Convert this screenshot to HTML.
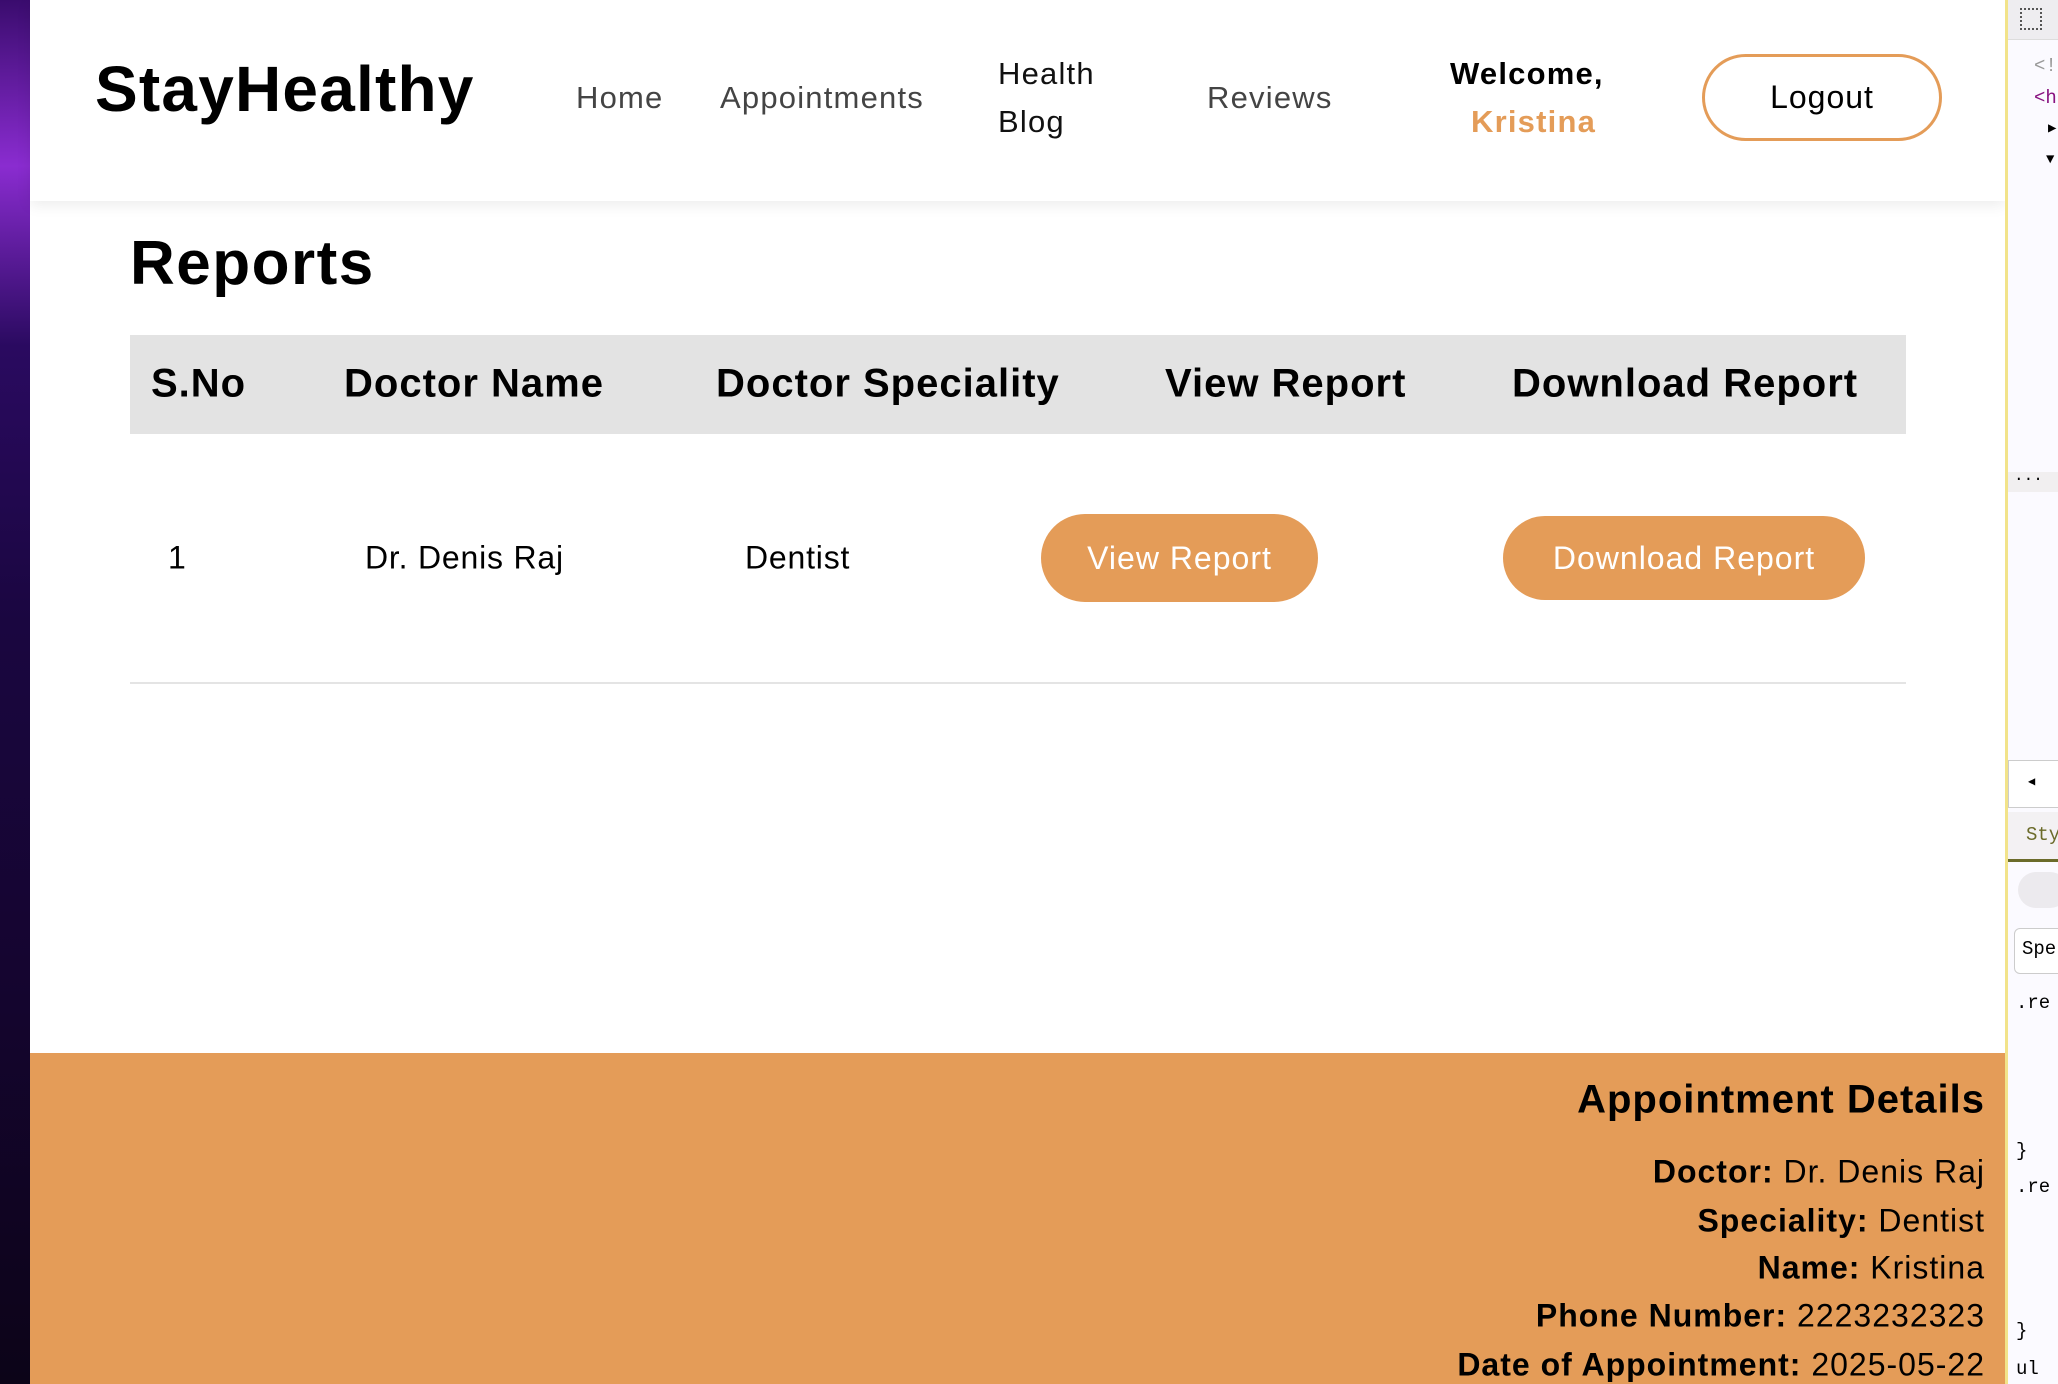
<!DOCTYPE html>
<html><head><meta charset="utf-8"><style>
*{margin:0;padding:0;box-sizing:border-box}
body{width:2058px;height:1384px;overflow:hidden;position:relative;background:#fff;font-family:"Liberation Sans",sans-serif;color:#000}
.a{position:absolute;white-space:nowrap}
#left{left:0;top:0;width:30px;height:1384px;background:linear-gradient(180deg,#3a0c6e 0%,#8a2cd0 12%,#2a0a60 25%,#1a0640 45%,#150530 70%,#0c0418 100%)}
#nav{left:30px;top:0;width:1975px;height:201px;background:#fff;box-shadow:0 4px 14px rgba(0,0,0,.08)}
.n{font-size:31px;color:#444;transform:translateY(-50%);letter-spacing:1.2px}
.btn{position:absolute;background:#e49c58;color:#fff;border-radius:44px;font-size:32px;display:flex;align-items:center;justify-content:center;letter-spacing:1px}
.th{font-size:40px;font-weight:bold;top:384px;transform:translateY(-50%);letter-spacing:1px}
.td{font-size:32px;top:558px;transform:translateY(-50%);letter-spacing:0.8px}
#foot{left:30px;top:1053px;width:1975px;height:331px;background:#e49c58}
.f{right:73px;font-size:32px;transform:translateY(-50%);letter-spacing:1px}
#dev{left:2005px;top:0;width:53px;height:1384px;background:#fbfaff;border-left:3px solid #f2e38a;font-family:"Liberation Mono",monospace;font-size:19px;overflow:hidden}
</style></head><body>
<div class="a" id="left"></div>
<div class="a" id="nav"></div>
<div class="a" style="left:95px;top:52px;font-size:64px;font-weight:bold;letter-spacing:1.2px">StayHealthy</div>
<div class="a n" style="left:576px;top:98px">Home</div>
<div class="a n" style="left:720px;top:98px">Appointments</div>
<div class="a n" style="left:998px;top:74px;color:#111">Health</div>
<div class="a n" style="left:998px;top:122px;color:#111">Blog</div>
<div class="a n" style="left:1207px;top:98px">Reviews</div>
<div class="a n" style="left:1450px;top:74px;font-weight:bold;color:#000">Welcome,</div>
<div class="a n" style="left:1471px;top:122px;font-weight:bold;color:#e49c58">Kristina</div>
<div class="a" style="left:1702px;top:54px;width:240px;height:87px;border:3px solid #e49c58;border-radius:44px;display:flex;align-items:center;justify-content:center;font-size:32px;letter-spacing:1px">Logout</div>

<div class="a" style="left:130px;top:228px;font-size:62px;font-weight:bold;letter-spacing:1.5px">Reports</div>
<div class="a" style="left:130px;top:335px;width:1776px;height:99px;background:#e3e3e3"></div>
<div class="a th" style="left:151px">S.No</div>
<div class="a th" style="left:344px">Doctor Name</div>
<div class="a th" style="left:716px">Doctor Speciality</div>
<div class="a th" style="left:1165px">View Report</div>
<div class="a th" style="left:1512px">Download Report</div>
<div class="a td" style="left:168px">1</div>
<div class="a td" style="left:365px">Dr. Denis Raj</div>
<div class="a td" style="left:745px">Dentist</div>
<div class="btn" style="left:1041px;top:514px;width:277px;height:88px">View Report</div>
<div class="btn" style="left:1503px;top:516px;width:362px;height:84px">Download Report</div>
<div class="a" style="left:130px;top:682px;width:1776px;height:2px;background:#e4e4e4"></div>

<div class="a" id="foot"></div>
<div class="a f" style="top:1100px;font-size:40px;font-weight:bold">Appointment Details</div>
<div class="a f" style="top:1172px"><b>Doctor:</b> Dr. Denis Raj</div>
<div class="a f" style="top:1221px"><b>Speciality:</b> Dentist</div>
<div class="a f" style="top:1268px"><b>Name:</b> Kristina</div>
<div class="a f" style="top:1316px"><b>Phone Number:</b> 2223232323</div>
<div class="a f" style="top:1365px"><b>Date of Appointment:</b> 2025-05-22</div>

<div class="a" id="dev">
<div class="a" style="left:0;top:0;width:53px;height:40px;background:#eeedf0;border-bottom:1px solid #ddd"></div>
<div class="a" style="left:12px;top:8px;width:22px;height:22px;border:2px dotted #555"></div>
<div class="a" style="left:26px;top:55px;color:#999">&lt;!</div>
<div class="a" style="left:26px;top:87px;color:#881280">&lt;h</div>
<div class="a" style="left:40px;top:120px;font-size:14px">▶</div>
<div class="a" style="left:38px;top:152px;font-size:14px">▼</div>
<div class="a" style="left:0;top:472px;width:53px;height:20px;background:#f1eff0"></div>
<div class="a" style="left:6px;top:470px;font-size:16px">···</div>
<div class="a" style="left:0;top:760px;width:53px;height:48px;background:#fff;border:1px solid #ccc"></div>
<div class="a" style="left:20px;top:774px;font-size:12px">◀</div>
<div class="a" style="left:0;top:812px;width:53px;height:50px;background:#f3f1f3;border-bottom:3px solid #6b6b2a"></div>
<div class="a" style="left:18px;top:824px;color:#6b6b2a">Sty</div>
<div class="a" style="left:10px;top:872px;width:50px;height:36px;background:#eceaee;border-radius:18px"></div>
<div class="a" style="left:6px;top:928px;width:60px;height:46px;background:#fff;border:1px solid #ccc;border-radius:6px"></div>
<div class="a" style="left:14px;top:938px">Spe</div>
<div class="a" style="left:8px;top:992px">.re</div>
<div class="a" style="left:8px;top:1140px">}</div>
<div class="a" style="left:8px;top:1176px">.re</div>
<div class="a" style="left:8px;top:1320px">}</div>
<div class="a" style="left:8px;top:1358px">ul</div>
</div>
</body></html>
